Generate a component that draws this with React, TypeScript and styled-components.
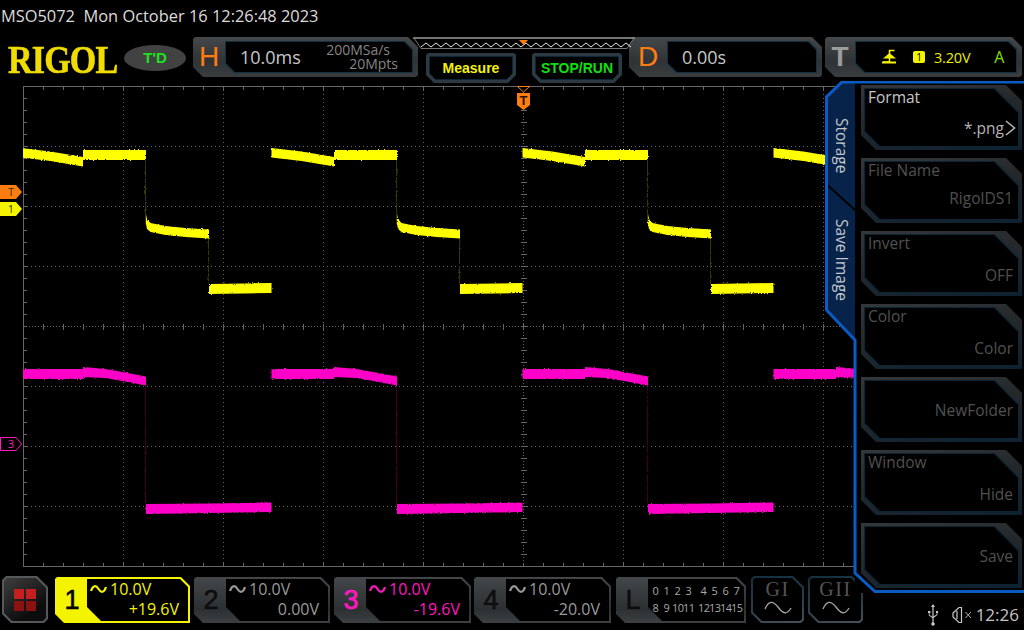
import styled, { createGlobalStyle, css } from 'styled-components'

// helpers
const UI_FONT = `'Open Sans', 'Noto Sans', sans-serif`

// clip corners: top-left, top-right, bottom-right, bottom-left
const bevel = (tl: number, tr: number, br: number, bl: number) => css`
  clip-path: polygon(
    ${tl}px 0,
    calc(100% - ${tr}px) 0,
    100% ${tr}px,
    100% calc(100% - ${br}px),
    calc(100% - ${br}px) 100%,
    ${bl}px 100%,
    0 calc(100% - ${bl}px),
    0 ${tl}px
  );
`

const GlobalStyle = createGlobalStyle`
  html, body {
    margin: 0;
    padding: 0;
    background: #000;
  }
  body {
    width: 1024px;
    height: 630px;
    overflow: hidden;
    font-family: ${UI_FONT};
  }
`

// page
const Screen = styled.div`
  width: 1024px;
  height: 630px;
  background: #000;
  color: #ccc;
  overflow: hidden;
`
const TitleBar = styled.div`
  height: 37px;
  padding: 5px 0 0 1px;
  box-sizing: border-box;
  font-size: 16.4px;
  line-height: 21px;
  color: #dcdcdc;
  white-space: pre;
`

// header
const HeaderRow = styled.div`
  display: flex;
  align-items: flex-start;
  height: 44px;
  padding-left: 8px;
`
const Logo = styled.div`
  width: 116px;
  height: 40px;
  padding-top: 3px;
  box-sizing: border-box;
  font-family: 'Liberation Serif', serif;
  font-weight: bold;
  font-size: 41px;
  line-height: 38px;
  letter-spacing: -1px;
  color: #f0dc00;
  -webkit-text-stroke: 0.6px #f0dc00;
  transform: scaleX(0.83);
  transform-origin: left center;
`
const TdBadge = styled.div`
  width: 62px;
  height: 26px;
  margin-top: 8px;
  border-radius: 50%;
  background: #424242;
  color: #1fe01f;
  font-family: 'Liberation Sans', sans-serif;
  font-weight: bold;
  font-size: 15px;
  line-height: 26px;
  text-align: center;
`
const HeadBox = styled.div<{ $width: number; $left: number }>`
  display: flex;
  flex: 0 0 ${({ $width }) => $width}px;
  height: 40px;
  margin-left: ${({ $left }) => $left}px;
  padding: 4px 5px 4px 0;
  box-sizing: border-box;
  background: linear-gradient(180deg, #45484a 0%, #303335 60%, #3a3d3f 100%);
  ${bevel(2, 10, 2, 10)}
`
const HeadLetter = styled.div<{ $color: string; $width: number; $bold?: boolean }>`
  flex: 0 0 ${({ $width }) => $width}px;
  text-align: center;
  font-family: 'Liberation Sans', sans-serif;
  font-weight: ${({ $bold }) => ($bold ? 'bold' : 'normal')};
  font-size: 28px;
  line-height: 32px;
  color: ${({ $color }) => $color};
`
const HeadEdge = styled.div`
  flex: 1;
  min-width: 0;
  padding: 1px;
  background: #12303f;
  ${bevel(0, 8, 0, 9)}
`
const HeadBody = styled.div`
  display: flex;
  align-items: center;
  height: 100%;
  box-sizing: border-box;
  background: #000;
  ${bevel(0, 8, 0, 9)}
`
const TimeValue = styled.div<{ $left: number }>`
  margin-left: ${({ $left }) => $left}px;
  font-size: 18px;
  color: #c8c8c8;
`
const SampleInfo = styled.div`
  margin-left: auto;
  padding: 0 14px 0 0;
  text-align: right;
  font-size: 14px;
  line-height: 14px;
  color: #858585;
  & > div:first-child {
    padding-right: 8px;
  }
`
const TriggerSource = styled.div`
  flex: 0 0 12px;
  height: 12px;
  margin-left: 17px;
  border-radius: 2px;
  background: #f4f400;
  color: #000;
  font-size: 10px;
  line-height: 12px;
  text-align: center;
`
const TriggerLevel = styled.div`
  margin-left: 9px;
  font-size: 14.5px;
  letter-spacing: -0.2px;
  color: #eded00;
`
const TriggerMode = styled.div`
  margin-left: 24px;
  font-size: 16px;
  color: #7fe000;
`
const CenterColumn = styled.div`
  position: relative;
  z-index: 1;
  flex: 0 0 222px;
  margin-left: -5px;
`
const HeadButtons = styled.div`
  display: flex;
  gap: 16px;
  padding: 3px 0 0 13px;
`
const HeadButtonFrame = styled.div`
  width: 90px;
  height: 30px;
  padding: 3px;
  box-sizing: border-box;
  background: #2b3a43;
  ${bevel(2, 2, 8, 8)}
`
const HeadButtonFace = styled.div<{ $color: string }>`
  height: 100%;
  background: #000;
  color: ${({ $color }) => $color};
  font-family: 'Liberation Sans', sans-serif;
  font-weight: bold;
  font-size: 14px;
  line-height: 25px;
  text-align: center;
  box-shadow: inset 0 0 0 1px #0d2736;
  ${bevel(0, 0, 7, 7)}
`

// scope
const Body = styled.div`
  display: flex;
  align-items: flex-start;
  height: 495px;
`
const ScopeArea = styled.div`
  position: relative;
  flex: 0 0 825px;
  width: 825px;
  min-width: 0;
  height: 495px;
`
const ChannelTag = styled.div<{ $color: string; $top: number }>`
  position: absolute;
  left: 0;
  top: ${({ $top }) => $top}px;
  width: 22px;
  height: 14px;
  padding: 1px;
  box-sizing: border-box;
  background: ${({ $color }) => $color};
  clip-path: polygon(0 0, 16px 0, 100% 50%, 16px 100%, 0 100%);
`
const ChannelTagFace = styled.div<{ $color: string; $outline?: boolean }>`
  height: 100%;
  padding: 0 4px;
  background: ${({ $color, $outline }) => ($outline ? '#000' : $color)};
  color: ${({ $color, $outline }) => ($outline ? $color : '#3a3000')};
  font-size: 11px;
  line-height: 12px;
  text-align: center;
  clip-path: polygon(0 0, 15px 0, 100% 50%, 15px 100%, 0 100%);
`
const TriggerFlag = styled.div`
  position: absolute;
  left: 517px;
  top: 12px;
  width: 13px;
  height: 17px;
  background: #ff7d10;
  color: #2a1400;
  font-family: 'Liberation Sans', sans-serif;
  font-weight: bold;
  font-size: 13px;
  line-height: 15px;
  text-align: center;
  clip-path: polygon(0 0, 100% 0, 100% 70%, 50% 100%, 0 70%);
`

// right menu
const MenuPanel = styled.div`
  position: relative;
  z-index: 2;
  display: flex;
  flex: 0 0 199px;
  height: 512px;
`
const PanelOutline = styled.svg`
  position: absolute;
  left: 0;
  top: 0;
  pointer-events: none;
`
const TabColumn = styled.div`
  flex: 0 0 30px;
  height: 259px;
  display: flex;
  flex-direction: column;
  background: #07234a;
  clip-path: polygon(17px 0, 100% 0, 100% 100%, 0 229px, 0 16px);
`
const SideTab = styled.div<{ $height: number; $bottom: number }>`
  display: flex;
  align-items: center;
  justify-content: center;
  height: ${({ $height }) => $height}px;
  padding: 0 0 ${({ $bottom }) => $bottom}px 3px;
  box-sizing: border-box;
  writing-mode: vertical-rl;
  font-size: 15.5px;
  color: #c4c8cc;
  white-space: nowrap;
`
const MenuList = styled.div`
  flex: 1;
  min-width: 0;
  display: flex;
  flex-direction: column;
  gap: 8px;
  height: 512px;
  padding: 4px 2px 0 6px;
  box-sizing: border-box;
  background: #000;
`
const KeyFrame = styled.div`
  height: 65px;
  padding: 3px;
  flex: 0 0 65px;
  box-sizing: border-box;
  background: linear-gradient(170deg, #34383b 0%, #25282b 45%, #0c2131 100%);
  ${bevel(0, 16, 0, 15)}
`
const KeyEdge = styled.div`
  height: 100%;
  padding: 1px;
  box-sizing: border-box;
  background: #0c2433;
  ${bevel(0, 24, 0, 15)}
`
const KeyBody = styled.div`
  display: flex;
  flex-direction: column;
  justify-content: space-between;
  height: 100%;
  padding: 0 5px 7px 3px;
  box-sizing: border-box;
  background: #000;
  ${bevel(0, 24, 0, 15)}
`
const KeyLabel = styled.div<{ $enabled: boolean }>`
  min-height: 22px;
  margin-top: -3px;
  font-size: 15.5px;
  line-height: 22px;
  color: ${({ $enabled }) => ($enabled ? '#c8c8c8' : '#505050')};
`
const KeyValue = styled.div<{ $enabled: boolean; $lift: number }>`
  display: flex;
  align-items: center;
  justify-content: flex-end;
  margin-bottom: ${({ $lift }) => $lift}px;
  font-size: 15.5px;
  line-height: 20px;
  color: ${({ $enabled }) => ($enabled ? '#b4b4b4' : '#505050')};
`

// footer
const Footer = styled.div`
  display: flex;
  align-items: flex-start;
  height: 54px;
  padding-left: 2px;
`
const MenuFrame = styled.div`
  flex: 0 0 46px;
  height: 47px;
  padding: 2px;
  box-sizing: border-box;
  background: #55595c;
  ${bevel(4, 11, 4, 9)}
`
const MenuFace = styled.div`
  display: grid;
  grid-template-columns: 10px 10px;
  grid-template-rows: 10px 10px;
  gap: 2px;
  align-content: center;
  justify-content: center;
  height: 100%;
  background: linear-gradient(145deg, #3e3e3e 0%, #0c0c0c 75%);
  ${bevel(3, 10, 3, 8)}
`
const MenuDot = styled.div<{ $dark?: boolean }>`
  background: ${({ $dark }) => ($dark ? '#8c1212' : '#c42020')};
`
const ChannelCard = styled.div<{ $width: number; $left: number; $active?: boolean }>`
  display: flex;
  flex: 0 0 ${({ $width }) => $width}px;
  height: 46px;
  margin: 1px 0 0 ${({ $left }) => $left}px;
  padding: 2px;
  box-sizing: border-box;
  background: ${({ $active }) =>
    $active ? '#f4f400' : 'linear-gradient(180deg, #44474a 0%, #2d3033 70%, #3c4043 100%)'};
  ${bevel(2, 9, 0, 9)}
`
const ChannelNumber = styled.div<{ $color: string; $width: number }>`
  flex: 0 0 ${({ $width }) => $width}px;
  text-align: center;
  font-family: 'Liberation Sans', sans-serif;
  font-size: 27px;
  line-height: 42px;
  color: ${({ $color }) => $color};
  -webkit-text-stroke: 0.6px ${({ $color }) => $color};
`
const ChannelBody = styled.div<{ $color: string }>`
  flex: 1;
  min-width: 0;
  display: flex;
  flex-direction: column;
  padding: 0 9px 0 3px;
  background: #000;
  color: ${({ $color }) => $color};
  font-size: 16px;
  line-height: 20px;
  ${bevel(0, 8, 0, 14)}
`
const ChannelRow = styled.div`
  display: flex;
  align-items: center;
  gap: 3px;
`
const ChannelOffset = styled.div`
  text-align: right;
`
const LogicGrid = styled.div`
  flex: 1;
  min-width: 0;
  display: grid;
  grid-template-columns: repeat(4, 11px) 4px repeat(4, 11px);
  grid-auto-rows: 17px;
  align-content: center;
  padding-left: 2px;
  background: #000;
  color: #a8a8a8;
  font-size: 11px;
  text-align: center;
  letter-spacing: -0.5px;
  ${bevel(0, 8, 0, 14)}
`
const GroupCard = styled.div<{ $width: number; $left: number }>`
  flex: 0 0 ${({ $width }) => $width}px;
  height: 47px;
  margin-left: ${({ $left }) => $left}px;
  padding: 2px;
  box-sizing: border-box;
  background: linear-gradient(170deg, #123040 0%, #2c3e48 60%, #46505a 100%);
  ${bevel(3, 11, 3, 10)}
`
const GroupFace = styled.div`
  display: flex;
  flex-direction: column;
  align-items: center;
  height: 100%;
  background: #000;
  font-family: 'Liberation Serif', serif;
  font-size: 20px;
  line-height: 23px;
  letter-spacing: 1.5px;
  color: #555;
  ${bevel(2, 10, 2, 9)}
`
const StatusArea = styled.div`
  display: flex;
  align-items: center;
  gap: 4px;
  margin: 27px 5px 0 auto;
  color: #c4c4c4;
  font-size: 17px;
  line-height: 24px;
`

// drawings
function Overview() {
  const zigzag: string[] = []
  for (let x = 0; x <= 42; x++) {
    zigzag.push(`${8 + x * 5},${x % 2 === 0 ? 10 : 6}`)
  }
  return (
    <svg width="222" height="13" style={{ display: 'block' }}>
      <path d="M1 1 H221 L214 11.5 H8 Z" fill="#000" stroke="#777" strokeWidth="1" />
      <path d="M0 1 H222" stroke="#8a8a8a" strokeWidth="1.5" />
      <polyline points={zigzag.join(' ')} fill="none" stroke="#e8e8e8" strokeWidth="1" />
      <path d="M106 3 H115 L110.5 8 Z" fill="#ff7d10" />
    </svg>
  )
}

const YELLOW = [
  '0,148 30,151.5 62.5,157 62.5,166.5 30,161 0,157.5',
  '62.5,150 125.5,150 125.5,160 62.5,160',
  '125.5,214 126.5,219 130,223 145,226 165,228 188.5,229.5 188.5,238.5 165,237 145,235 130,232 126.5,229 125.5,224',
  '188.5,284 251,283 251,293 188.5,294',
]
const MAGENTA = [
  '0,369 62.5,369 62.5,379 0,379',
  '62.5,367 85,369 107,373 125.5,376.5 125.5,385.5 107,382 85,378 62.5,377',
  '125.5,504 188.5,503.5 251,502.5 251,512 188.5,513 125.5,514',
]
const PERIODS = [20.5, 271.5, 522.5, 773.5]
const range = (from: number, to: number, step: number) => {
  const out: number[] = []
  for (let v = from; v <= to; v += step) out.push(v)
  return out
}

function Graticule() {
  const top = 5
  const bottom = 485
  const left = 23
  const right = 860
  const vLines = range(123, 823, 100).filter((x) => x !== 523)
  const hLines = range(65, 425, 60).filter((y) => y !== 245)
  return (
    <g stroke="#666" strokeWidth="1" shapeRendering="crispEdges">
      {vLines.map((x) => (
        <line key={x} x1={x + 0.5} x2={x + 0.5} y1={top} y2={bottom} strokeDasharray="1 3" />
      ))}
      {hLines.map((y) => (
        <line key={y} x1={left} x2={right} y1={y + 0.5} y2={y + 0.5} strokeDasharray="1 3" />
      ))}
      <line x1={left} x2={right} y1={245.5} y2={245.5} strokeDasharray="1 2" />
      <line x1={523.5} x2={523.5} y1={top} y2={bottom} strokeDasharray="1 2" />
      <line x1={left} x2={right} y1={top + 0.5} y2={top + 0.5} />
      <line x1={left} x2={right} y1={bottom + 0.5} y2={bottom + 0.5} />
      <line x1={left + 0.5} x2={left + 0.5} y1={top} y2={bottom} />
      {range(43, 843, 20).map((x) => (
        <g key={x}>
          <line x1={x + 0.5} x2={x + 0.5} y1={top} y2={top + 4} />
          <line x1={x + 0.5} x2={x + 0.5} y1={bottom - 3} y2={bottom} />
          <line x1={x + 0.5} x2={x + 0.5} y1={243} y2={249} />
        </g>
      ))}
      {range(17, 473, 12).map((y) => (
        <g key={y}>
          <line x1={left} x2={left + 4} y1={y + 0.5} y2={y + 0.5} />
          <line x1={521} x2={527} y1={y + 0.5} y2={y + 0.5} />
        </g>
      ))}
    </g>
  )
}

function Waves() {
  return (
    <g clipPath="url(#traceArea)">
      <g filter="url(#traceBlur)">
        {PERIODS.map((x) => (
          <g key={x} transform={`translate(${x} -81)`}>
            <line x1="125" x2="125" y1="160" y2="224" stroke="#3a3600" strokeWidth="1" />
            <line x1="188" x2="188" y1="238" y2="284" stroke="#3a3600" strokeWidth="1" />
            <line x1="125" x2="125" y1="385" y2="504" stroke="#3a0028" strokeWidth="1" />
            {YELLOW.map((points) => (
              <polygon key={points} points={points} fill="#ffff00" />
            ))}
            {MAGENTA.map((points) => (
              <polygon key={points} points={points} fill="#ff00c8" />
            ))}
          </g>
        ))}
      </g>
    </g>
  )
}

function SineMark() {
  return (
    <svg width="17" height="10" viewBox="0 0 17 10">
      <path d="M1 7 C3 1 6 1 8.5 5 C11 9 14 9 16 3" fill="none" stroke="currentColor" strokeWidth="2.2" />
    </svg>
  )
}

function UsbIcon() {
  return (
    <svg width="14" height="24" viewBox="0 0 14 24" style={{ marginRight: 8 }}>
      <path
        d="M7 1 L9 4 H7.6 V20 H6.4 V4 H5 Z M7 15.5 L2.8 12.5 V10 H2 V8 H4.4 V10 H3.6 V12 L6.6 14 Z M7.4 13.5 L10.6 11.5 V10 H10 V8 H12 V10 H11.4 V12 L7.4 15 Z"
        fill="#c8c8c8"
      />
      <circle cx="7" cy="21" r="1.8" fill="#c8c8c8" />
    </svg>
  )
}

function MuteIcon() {
  return (
    <svg width="20" height="20" viewBox="0 0 20 20">
      <path
        d="M1 8 L7 2.5 H9.5 V17.5 H7 L1 12 Z M5 6 V14"
        fill="none"
        stroke="#c8c8c8"
        strokeWidth="1.2"
      />
      <path d="M13.5 7 L19 13 M19 7 L13.5 13" stroke="#b0b0b0" strokeWidth="1" />
    </svg>
  )
}

function TriggerEdge() {
  return (
    <svg width="14" height="16" viewBox="0 0 14 16" style={{ marginLeft: 26, flex: '0 0 14px' }}>
      <path d="M12.5 1.5 H7.5 V13 H1" fill="none" stroke="#f4f400" strokeWidth="1.5" />
      <path d="M1 9.5 L7.5 4 L14 9.5 Z" fill="#f4f400" />
      <path d="M0 12.5 H14 V14.5 H0 Z" fill="#f4f400" />
    </svg>
  )
}

// data
const softKeys = [
  { label: 'Format', value: '*.png', enabled: true, more: true, lift: 1 },
  { label: 'File Name', value: 'RigolDS1', enabled: false, lift: 4 },
  { label: 'Invert', value: 'OFF', enabled: false, lift: 0 },
  { label: 'Color', value: 'Color', enabled: false, lift: 0 },
  { label: '', value: 'NewFolder', enabled: false, lift: 11 },
  { label: 'Window', value: 'Hide', enabled: false, lift: 0 },
  { label: '', value: 'Save', enabled: false, lift: 11 },
]

const channels = [
  { id: '1', width: 135, left: 7, numberColor: '#000', color: '#f4f400', scale: '10.0V', offset: '+19.6V', active: true },
  { id: '2', width: 136, left: 4, numberColor: '#0e0e0e', color: '#9a9a9a', scale: '10.0V', offset: '0.00V' },
  { id: '3', width: 137, left: 4, numberColor: '#ff18c0', color: '#ff18c0', scale: '10.0V', offset: '-19.6V' },
  { id: '4', width: 137, left: 3, numberColor: '#0e0e0e', color: '#9a9a9a', scale: '10.0V', offset: '-20.0V' },
]

const logicBits = [
  ['0', '1', '2', '3', '', '4', '5', '6', '7'],
  ['8', '9', '10', '11', '', '12', '13', '14', '15'],
]

function App() {
  return (
    <Screen>
      <GlobalStyle />
      <TitleBar>MSO5072  Mon October 16 12:26:48 2023</TitleBar>

      <HeaderRow>
        <Logo>RIGOL</Logo>
        <TdBadge>T'D</TdBadge>
        <HeadBox $width={225} $left={7}>
          <HeadLetter $color="#ff7d10" $width={32}>H</HeadLetter>
          <HeadEdge>
            <HeadBody>
              <TimeValue $left={14}>10.0ms</TimeValue>
              <SampleInfo>
                <div>200MSa/s</div>
                <div>20Mpts</div>
              </SampleInfo>
            </HeadBody>
          </HeadEdge>
        </HeadBox>
        <CenterColumn>
          <Overview />
          <HeadButtons>
            <HeadButtonFrame>
              <HeadButtonFace $color="#f4f400">Measure</HeadButtonFace>
            </HeadButtonFrame>
            <HeadButtonFrame>
              <HeadButtonFace $color="#10e010">STOP/RUN</HeadButtonFace>
            </HeadButtonFrame>
          </HeadButtons>
        </CenterColumn>
        <HeadBox $width={193} $left={-6}>
          <HeadLetter $color="#ff7d10" $width={38}>D</HeadLetter>
          <HeadEdge>
            <HeadBody>
              <TimeValue $left={14}>0.00s</TimeValue>
            </HeadBody>
          </HeadEdge>
        </HeadBox>
        <HeadBox $width={197} $left={3}>
          <HeadLetter $color="#9c9c9c" $width={30} $bold>T</HeadLetter>
          <HeadEdge>
            <HeadBody>
              <TriggerEdge />
              <TriggerSource>1</TriggerSource>
              <TriggerLevel>3.20V</TriggerLevel>
              <TriggerMode>A</TriggerMode>
            </HeadBody>
          </HeadEdge>
        </HeadBox>
      </HeaderRow>

      <Body>
        <ScopeArea>
          <svg width="860" height="495" style={{ display: 'block', overflow: 'visible' }}>
            <defs>
              <filter id="traceBlur" x="-2%" y="-2%" width="104%" height="104%">
                <feTurbulence type="fractalNoise" baseFrequency="0.7" numOctaves="2" seed="4" result="noise" />
                <feDisplacementMap in="SourceGraphic" in2="noise" scale="2.5" xChannelSelector="R" yChannelSelector="G" />
                <feGaussianBlur stdDeviation="0.5" />
              </filter>
              <clipPath id="traceArea">
                <rect x="23" y="0" width="840" height="495" />
              </clipPath>
            </defs>
            <Graticule />
            <Waves />
            <path d="M517.5 5.5 H529.5 L523.5 11 Z" fill="#000" stroke="#ff7d10" />
          </svg>
          <TriggerFlag>T</TriggerFlag>
          <ChannelTag $color="#ff7d10" $top={104}>
            <ChannelTagFace $color="#ff7d10">T</ChannelTagFace>
          </ChannelTag>
          <ChannelTag $color="#f4f400" $top={121}>
            <ChannelTagFace $color="#f4f400">1</ChannelTagFace>
          </ChannelTag>
          <ChannelTag $color="#ff18c0" $top={356}>
            <ChannelTagFace $color="#ff18c0" $outline>3</ChannelTagFace>
          </ChannelTag>
        </ScopeArea>

        <MenuPanel>
          <TabColumn>
            <SideTab $height={129} $bottom={0}>Storage</SideTab>
            <SideTab $height={130} $bottom={30}>Save Image</SideTab>
          </TabColumn>
          <MenuList>
            {softKeys.map((key, i) => (
              <KeyFrame key={i}>
                <KeyEdge>
                  <KeyBody>
                    <KeyLabel $enabled={key.enabled}>{key.label}</KeyLabel>
                    <KeyValue $enabled={key.enabled} $lift={key.lift}>
                      {key.value}
                      {key.more && (
                        <svg width="13" height="18" viewBox="0 0 13 18" style={{ marginRight: -4 }}>
                          <path d="M2 2 L10.5 9 L2 16" fill="none" stroke="#b4b4b4" strokeWidth="1.6" />
                        </svg>
                      )}
                    </KeyValue>
                  </KeyBody>
                </KeyEdge>
              </KeyFrame>
            ))}
          </MenuList>
          <PanelOutline width="199" height="512">
            <path d="M0 102 L30 129" stroke="#000" strokeWidth="2" />
            <path
              d="M199 1 H17 L1.5 16 V229 L30 259 V492 L50 510.5 H199"
              fill="none"
              stroke="#0a5cc4"
              strokeWidth="3"
            />
          </PanelOutline>
        </MenuPanel>
      </Body>

      <Footer>
        <MenuFrame>
          <MenuFace>
            <MenuDot />
            <MenuDot />
            <MenuDot $dark />
            <MenuDot $dark />
          </MenuFace>
        </MenuFrame>
        {channels.map((ch) => (
          <ChannelCard key={ch.id} $width={ch.width} $left={ch.left} $active={ch.active}>
            <ChannelNumber $color={ch.numberColor} $width={30}>{ch.id}</ChannelNumber>
            <ChannelBody $color={ch.color}>
              <ChannelRow>
                <SineMark />
                {ch.scale}
              </ChannelRow>
              <ChannelOffset>{ch.offset}</ChannelOffset>
            </ChannelBody>
          </ChannelCard>
        ))}
        <ChannelCard $width={130} $left={5}>
          <ChannelNumber $color="#0e0e0e" $width={30}>L</ChannelNumber>
          <LogicGrid>
            {logicBits.flat().map((bit, i) => (
              <span key={i}>{bit}</span>
            ))}
          </LogicGrid>
        </ChannelCard>
        <GroupCard $width={53} $left={5}>
          <GroupFace>
            GI
            <svg width="28" height="14" viewBox="0 0 28 14">
              <path d="M1 8 C5 -1 9 0 14 6 C19 13 23 14 27 7" fill="none" stroke="#a0a0a0" strokeWidth="1.4" />
            </svg>
          </GroupFace>
        </GroupCard>
        <GroupCard $width={55} $left={4}>
          <GroupFace>
            GII
            <svg width="28" height="14" viewBox="0 0 28 14">
              <path d="M1 8 C5 -1 9 0 14 6 C19 13 23 14 27 7" fill="none" stroke="#a0a0a0" strokeWidth="1.4" />
            </svg>
          </GroupFace>
        </GroupCard>
        <StatusArea>
          <UsbIcon />
          <MuteIcon />
          12:26
        </StatusArea>
      </Footer>
    </Screen>
  )
}

export default App
